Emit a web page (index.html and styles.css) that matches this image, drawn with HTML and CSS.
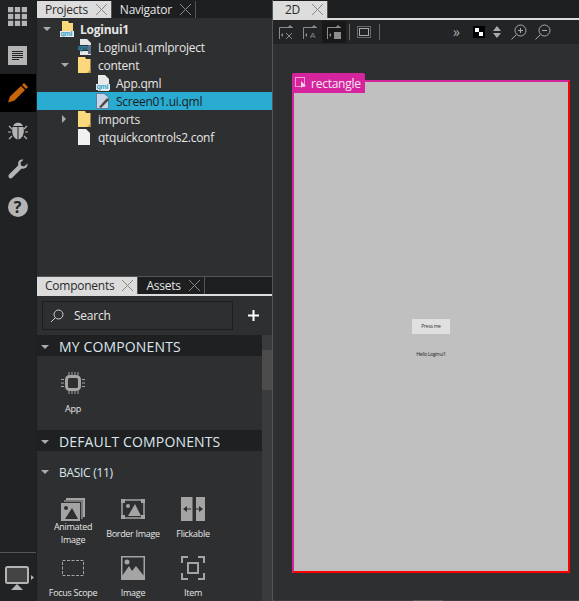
FILE: index.html
```html
<!DOCTYPE html>
<html lang="en">
<head>
    <meta charset="UTF-8">
    <title>Qt Design Studio</title>
    <link rel="stylesheet" href="styles.css">
</head>
<body>
    <div class="rail">
        <div class="rail-item first">
            <svg width="19" height="19" viewBox="0 0 18 18" fill="#b4b4b4">
                <rect width="5" height="5"/><rect x="6.500" width="5" height="5"/><rect x="13" width="5" height="5"/>
                <rect y="6.500" width="5" height="5"/><rect x="6.500" y="6.500" width="5" height="5"/><rect x="13" y="6.500" width="5" height="5"/>
                <rect y="13" width="5" height="5"/><rect x="6.500" y="13" width="5" height="5"/><rect x="13" y="13" width="5" height="5"/>
            </svg>
        </div>
        <div class="rail-item">
            <svg width="19" height="19" viewBox="0 0 19 19">
                <rect width="19" height="19" fill="#b4b4b4"/>
                <path d="M4 5.500h11M4 7.500h11M4 9.500h11M4 11.500h11M4 13.500h7" stroke="#222" stroke-width="1"/>
            </svg>
        </div>
        <div class="rail-item active">
            <svg width="20" height="20" viewBox="0 0 20 20">
                <path d="M0 19.500 2 13.500 13 3 17 7 6.500 17.500Z" fill="#c8650b"/>
                <path d="M14 2 16 0 20 4 18 6Z" fill="#c8650b"/>
            </svg>
        </div>
        <div class="rail-item">
            <svg width="20" height="20" viewBox="0 0 20 20">
                <path d="M1 5l3 3M19 5l-3 3M0 11h3M20 11h-3M1 18l3-3M19 18l-3-3" stroke="#b4b4b4" stroke-width="1.200"/>
                <path d="M6 3.500C7 1 13 1 14 3.500L15 5H5Z" fill="#b4b4b4"/>
                <path d="M9.500 6H4.500C3.500 11 4.500 17 9.500 18.500ZM10.500 6H15.500C16.500 11 15.500 17 10.500 18.500Z" fill="#b4b4b4"/>
            </svg>
        </div>
        <div class="rail-item">
            <svg width="20" height="20" viewBox="0 0 20 20">
                <path d="M14 0.500C11 0.500 9.500 3 10.300 6.200L0.800 15.800C-0.500 18 2 20.500 4 19L13.600 9.500C17 10.300 19.800 8.500 19.500 4.500L16 7.500 13 6.500 12.500 3.500 15.500 0.800Z" fill="#b4b4b4"/>
            </svg>
        </div>
        <div class="rail-item">
            <div class="help-icon">?</div>
        </div>
        <div class="rail-bottom">
            <svg width="30" height="25" viewBox="0 0 30 25">
                <rect x="1" y="1" width="22" height="16" rx="1.500" fill="#444" stroke="#b4b4b4" stroke-width="2"/>
                <path d="M12 18 6 24H18Z" fill="#b4b4b4"/>
                <path d="M26 9l3 2.500-3 2.500Z" fill="#b4b4b4"/>
            </svg>
        </div>
    </div>

    <div class="left-col">
        <div class="tabs">
            <div class="tab current">Projects <span class="tab-x"></span></div>
            <div class="tab">Navigator <span class="tab-x"></span></div>
        </div>
        <div class="tree">
            <div class="row bold">
                <span class="arrow down"></span>
                <svg class="file-icon" viewBox="0 0 16 16"><path d="M2 0H8L9 2H13V16H2Z" fill="#fcd87c"/><rect y="10" width="14" height="6" fill="#e8eef0"/><text x="0.500" y="15" class="qml-tag">qml</text></svg>
                Loginui1
            </div>
            <div class="row lvl1">
                <svg class="file-icon" viewBox="0 0 16 16"><path d="M2 0H9L13 4V16H2Z" fill="#e4e6e8"/><rect x="0" y="6" width="10" height="6" fill="#2e2f30"/><text x="0" y="11" class="qml-tag">qml</text><rect x="10" y="6" width="3" height="9" fill="#5c6f86"/></svg>
                Loginui1.qmlproject
            </div>
            <div class="row lvl1">
                <span class="arrow down"></span>
                <svg class="file-icon" viewBox="0 0 16 16"><path d="M0 0H7L8 2H12.500V16H0Z" fill="#fcd87c"/><path d="M9 16 12.500 12.500V16Z" fill="#c49c3c"/></svg>
                content
            </div>
            <div class="row lvl2">
                <svg class="file-icon" viewBox="0 0 16 16"><path d="M2 0H9L13 4V16H2Z" fill="#e8e8e8"/><rect y="9" width="14" height="6" fill="#e8eef0"/><text x="0.500" y="14" class="qml-tag">qml</text></svg>
                App.qml
            </div>
            <div class="row lvl2 selected">
                <svg class="file-icon" viewBox="0 0 16 16"><path d="M.5 .5H8L12.500 4V15.500H.5Z" fill="#c6d6e8" stroke="#5c7ea0"/><path d="M3 14 11 5 13 7 5 15Z" fill="#54493c"/></svg>
                Screen01.ui.qml
            </div>
            <div class="row lvl1">
                <span class="arrow right"></span>
                <svg class="file-icon" viewBox="0 0 16 16"><path d="M0 0H7L8 2H12.500V16H0Z" fill="#fcd87c"/><path d="M9 16 12.500 12.500V16Z" fill="#c49c3c"/></svg>
                imports
            </div>
            <div class="row lvl1">
                <svg class="file-icon" viewBox="0 0 16 16"><path d="M0 0H8L12 4V16H0Z" fill="#f0f0f0"/></svg>
                qtquickcontrols2.conf
            </div>
        </div>

        <div class="components">
            <div class="tabs lined">
                <div class="tab current">Components <span class="tab-x"></span></div>
                <div class="tab">Assets <span class="tab-x"></span></div>
            </div>
            <div class="search-bar">
                <div class="search-box">
                    <svg width="14" height="14" viewBox="0 0 14 14" fill="none" stroke="#d0d0d0"><circle cx="8.500" cy="5.500" r="4.500"/><path d="M5 9 1 13"/></svg>
                    Search
                </div>
                <svg class="plus" width="11" height="11" viewBox="0 0 11 11"><path d="M0 5.500h11M5.500 0v11" stroke="#fff" stroke-width="2"/></svg>
            </div>
            <div class="lib">
                <div class="lib-list">
                    <div class="section"><span class="arrow down"></span>MY COMPONENTS</div>
                    <div class="grid my-grid">
                        <div class="item">
                            <svg width="24" height="22" viewBox="0 0 24 22" fill="none" stroke="#a4a4a4">
                                <rect x="5.500" y="4.500" width="13" height="13" rx="3" stroke-width="3"/>
                                <path d="M8 0v3M11 0v3M14 0v3M17 0v3M8 19v3M11 19v3M14 19v3M17 19v3M0 7.500h3M0 11h3M0 14.500h3M21 7.500h3M21 11h3M21 14.500h3"/>
                            </svg>
                            <span class="item-name">App</span>
                        </div>
                    </div>
                    <div class="section"><span class="arrow down"></span>DEFAULT COMPONENTS</div>
                    <div class="subsection"><span class="arrow down"></span>BASIC (11)</div>
                    <div class="grid">
                        <div class="item">
                            <svg width="24" height="24" viewBox="0 0 24 24">
                                <path d="M5 3V1H24V20H22V3Z" fill="#a4a4a4"/><path d="M3 5V3H22V22H20V5Z" fill="#7a7a7a"/>
                                <rect y="6" width="19" height="18" fill="#a4a4a4"/><circle cx="5" cy="11" r="2" fill="#2e2f30"/><path d="M4 22 11 11 17 22Z" fill="#2e2f30"/>
                            </svg>
                            <span class="item-name">Animated Image</span>
                        </div>
                        <div class="item">
                            <svg width="24" height="24" viewBox="0 0 24 24">
                                <rect x="1" y="3" width="22" height="18" fill="none" stroke="#a4a4a4" stroke-width="1.500"/>
                                <rect y="2" width="4" height="4" fill="#a4a4a4"/><rect x="20" y="2" width="4" height="4" fill="#a4a4a4"/><rect y="18" width="4" height="4" fill="#a4a4a4"/><rect x="20" y="18" width="4" height="4" fill="#a4a4a4"/>
                                <circle cx="7" cy="9" r="2" fill="#a4a4a4"/><path d="M7 19 14 7 20 19Z" fill="#a4a4a4"/>
                            </svg>
                            <span class="item-name">Border Image</span>
                        </div>
                        <div class="item">
                            <svg width="24" height="24" viewBox="0 0 24 24">
                                <rect width="11.500" height="24" fill="#a4a4a4"/><rect x="15" width="9" height="24" fill="#a4a4a4"/>
                                <path d="M2 12 6 9V15ZM22 12 18 9V15Z" fill="#2e2f30"/><path d="M6 12h4M15 12h3" stroke="#2e2f30"/>
                            </svg>
                            <span class="item-name">Flickable</span>
                        </div>
                        <div class="item">
                            <svg width="24" height="24" viewBox="0 0 24 24"><rect x="1.500" y="4.500" width="21" height="15" fill="none" stroke="#a4a4a4" stroke-dasharray="3 1.500"/></svg>
                            <span class="item-name">Focus Scope</span>
                        </div>
                        <div class="item">
                            <svg width="24" height="24" viewBox="0 0 24 24">
                                <rect width="24" height="24" fill="#a4a4a4"/><rect x="1.500" y="1.500" width="21" height="18" fill="#2e2f30"/>
                                <circle cx="6" cy="6" r="2.500" fill="#a4a4a4"/><path d="M1 20 8 10 11 15 15 10 23 20Z" fill="#a4a4a4"/>
                            </svg>
                            <span class="item-name">Image</span>
                        </div>
                        <div class="item">
                            <svg width="24" height="24" viewBox="0 0 24 24" fill="none" stroke="#a4a4a4" stroke-width="2">
                                <path d="M1 7V1H7M17 1H23V7M23 17V23H17M7 23H1V17"/><rect x="7" y="7" width="10" height="10"/>
                            </svg>
                            <span class="item-name">Item</span>
                        </div>
                    </div>
                </div>
                <div class="scrollbar"><div class="scroll-thumb"></div></div>
            </div>
        </div>
    </div>

    <div class="right-col">
        <div class="tabs lined">
            <div class="tab current tab-2d">2D <span class="tab-x"></span></div>
        </div>
        <div class="toolbar">
            <svg class="tool" viewBox="0 0 14 14" fill="none" stroke="#8c8c8c"><path d="M.5 14V2.500H14"/><path d="M9 2 11 0 13 2ZM2 10 4 8V12Z" fill="#8c8c8c" stroke="none"/><path d="M7 8l6 6M13 8l-6 6"/></svg>
            <svg class="tool" viewBox="0 0 14 14" fill="none" stroke="#8c8c8c"><path d="M.5 14V2.500H14"/><path d="M9 2 11 0 13 2ZM2 10 4 8V12Z" fill="#8c8c8c" stroke="none"/><text x="7" y="13" class="tool-letter">A</text></svg>
            <span class="tool-on"><svg width="14" height="14" viewBox="0 0 14 14" fill="none" stroke="#8c8c8c"><path d="M.5 14V2.500H14"/><path d="M9 2 11 0 13 2ZM2 10 4 8V12Z" fill="#8c8c8c" stroke="none"/><rect x="7" y="7" width="7" height="7" fill="#8c8c8c" stroke="none"/></svg></span>
            <span class="tool-sep"></span>
            <svg class="tool fit" viewBox="0 0 14 12" fill="none" stroke="#aaa"><rect x="2.500" y="2.500" width="9" height="7"/><rect x=".5" y=".5" width="13" height="11" stroke-dasharray="1 1"/></svg>
            <span class="tool-sep"></span>
            <span class="more">»</span>
            <svg class="swatch" width="12" height="12" viewBox="0 0 12 12"><rect width="12" height="12" fill="#000"/><rect x="2" y="2" width="4" height="4" fill="#fff"/><rect x="6" y="6" width="4" height="4" fill="#fff"/></svg>
            <svg class="updown" width="8" height="12" viewBox="0 0 8 12" fill="#aaa"><path d="M4 0 8 5H0ZM4 12 0 7H8Z"/></svg>
            <svg class="zoom-in" width="16" height="16" viewBox="0 0 16 16" fill="none" stroke="#aaa"><circle cx="9.500" cy="6.500" r="5.500"/><path d="M5.500 10.500 .5 15.500M7 6.500h5M9.500 4v5"/></svg>
            <svg width="16" height="16" viewBox="0 0 16 16" fill="none" stroke="#aaa"><circle cx="9.500" cy="6.500" r="5.500"/><path d="M5.500 10.500 .5 15.500M7 6.500h5"/></svg>
        </div>
        <div class="canvas">
            <div class="rectangle">
                <div class="sel-label">
                    <svg width="12" height="12" viewBox="0 0 12 12" fill="none" stroke="#f0a0d0"><rect x=".5" y=".5" width="9" height="9"/><path d="M6 4v7l2-2h3Z" fill="#f0d0e4" stroke="none"/></svg>
                    rectangle
                </div>
                <div class="press-btn">Press me</div>
                <div class="hello">Hello Loginui1</div>
            </div>
        </div>
        <div class="hbar"><div class="hbar-thumb"></div></div>
    </div>
</body>
</html>
```

FILE: styles.css
```css
body {
    margin: 0;
    width: 579px;
    height: 601px;
    overflow: hidden;
    display: flex;
    background-color: #1d1e1f;
    font-family: "Open Sans", "Noto Sans", sans-serif;
    font-size: 12px;
    letter-spacing: -0.25px;
    color: #e6e6e6;
}

svg {
    display: block;
    flex-shrink: 0;
}

/* left icon rail */
.rail {
    width: 36px;
    margin-right: 1px;
    background-color: #212223;
    display: flex;
    flex-direction: column;
}

.rail-item {
    height: 38px;
    display: flex;
    align-items: center;
    justify-content: center;
    padding-right: 1px;
}

.rail-item.first {
    height: 33px;
    padding-bottom: 3px;
}

.rail-item.active {
    background-color: #000;
}

.help-icon {
    width: 20px;
    height: 20px;
    border-radius: 50%;
    background-color: #b4b4b4;
    color: #212223;
    font-size: 16px;
    font-weight: bold;
    line-height: 20px;
    text-align: center;
}

.rail-bottom {
    margin-top: auto;
    height: 49px;
    border-top: 1px solid #555;
    box-sizing: border-box;
    padding: 13px 0 0 5px;
}

/* tabs */
.tabs {
    height: 17px;
    display: flex;
    background-color: #1d1e1f;
    padding-top: 1px;
}

.tabs.lined {
    border-bottom: 2px solid #dcdcdc;
}

.components .tabs {
    padding-top: 0;
}

.tab {
    display: flex;
    align-items: center;
    padding: 0 4px 0 8px;
    gap: 8px;
    border-right: 1px solid #555;
}

.tab.current {
    background-color: #dcdcdc;
    color: #2a2a2a;
}

.tab-x {
    width: 11px;
    height: 11px;
    background:
        linear-gradient(45deg, transparent 46%, #888 46%, #888 54%, transparent 54%),
        linear-gradient(-45deg, transparent 46%, #888 46%, #888 54%, transparent 54%);
}

/* project tree */
.left-col {
    width: 235px;
    display: flex;
    flex-direction: column;
    border-right: 1px solid #555;
}

.tree {
    height: 258px;
    padding-top: 2px;
    box-sizing: border-box;
    background-color: #2e2f30;
}

.row {
    height: 18px;
    display: flex;
    align-items: center;
    gap: 4px;
    padding-left: 23px;
    position: relative;
}

.row.bold {
    font-weight: bold;
}

.row.lvl1 {
    padding-left: 41px;
}

.row.lvl2 {
    padding-left: 59px;
}

.selected {
    background-color: #2aabd2;
    color: #1c1c1c;
}

.arrow {
    position: absolute;
    width: 0;
    height: 0;
}

.row .arrow {
    margin-left: -17px;
}

.arrow.down {
    border-left: 4px solid transparent;
    border-right: 4px solid transparent;
    border-top: 4px solid #aaa;
}

.row .arrow.right {
    border-top: 4px solid transparent;
    border-bottom: 4px solid transparent;
    border-left: 4px solid #aaa;
    margin-left: -16px;
}

.file-icon {
    width: 16px;
    height: 16px;
}

.qml-tag {
    font-family: "Liberation Sans", sans-serif;
    font-size: 7px;
    fill: #2f9fc4;
    font-weight: bold;
}

/* components panel */
.components {
    flex: 1;
    border-top: 1px solid #555;
    display: flex;
    flex-direction: column;
    min-height: 0;
}

.search-bar {
    height: 39px;
    background-color: #2e2f30;
    display: flex;
    align-items: center;
    padding-left: 5px;
}

.search-box {
    width: 182px;
    height: 27px;
    border: 1px solid #1d1e1f;
    display: flex;
    align-items: center;
    gap: 10px;
    padding-left: 7px;
}

.plus {
    margin-left: 15px;
}

.lib {
    flex: 1;
    display: flex;
    min-height: 0;
    background-color: #2e2f30;
}

.lib-list {
    width: 225px;
}

.section {
    height: 21px;
    background-color: #1f2021;
    font-size: 14px;
    letter-spacing: 0.15px;
    line-height: 23px;
    padding-left: 22px;
    position: relative;
    color: #dde6ee;
}

.section .arrow,
.subsection .arrow {
    left: 4px;
    top: 10px;
}

.subsection {
    height: 42px;
    line-height: 44px;
    padding-left: 22px;
    position: relative;
    color: #dde6ee;
    letter-spacing: -0.3px;
}

.subsection .arrow {
    top: 19px;
}

.grid {
    display: grid;
    grid-template-columns: repeat(3, 60px);
    padding: 4px 0 0 6px;
}

.my-grid {
    height: 74px;
    padding-top: 16px;
    box-sizing: border-box;
}

.item {
    height: 59px;
    display: flex;
    flex-direction: column;
    align-items: center;
    font-size: 9px;
    letter-spacing: -0.3px;
    line-height: 13px;
    text-align: center;
}

.item-name {
    height: 24px;
    display: flex;
    align-items: center;
}

.my-grid .item-name {
    margin-top: 2px;
}

.scrollbar {
    flex: 1;
    background-color: #3a3b3c;
}

.scroll-thumb {
    height: 40px;
    margin-top: 15px;
    background-color: #4c4c4c;
}

/* 2D view */
.right-col {
    flex: 1;
    display: flex;
    flex-direction: column;
    min-width: 0;
}

.tab-2d {
    width: 55px;
    box-sizing: border-box;
    justify-content: space-between;
    padding-left: 12px;
}

.toolbar {
    height: 24px;
    background-color: #232425;
    display: flex;
    align-items: center;
    padding-left: 6px;
}

.tool {
    width: 14px;
    height: 14px;
    margin-right: 10px;
    overflow: visible;
}

.tool-letter {
    font-family: "Liberation Sans", sans-serif;
    font-size: 8px;
    fill: #8c8c8c;
    stroke: none;
}

.tool-on {
    width: 24px;
    height: 22px;
    margin: 0 3px 0 -5px;
    background-color: #181818;
    display: flex;
    align-items: center;
    justify-content: center;
}

.tool-sep {
    width: 1px;
    height: 16px;
    background-color: #666;
    margin-right: 7px;
}

.tool.fit {
    height: 12px;
    margin-right: 8px;
}

.more {
    width: 8px;
    margin-left: 66px;
    margin-right: 12px;
    color: #aaa;
    font-size: 14px;
    line-height: 14px;
}

.swatch {
    margin-right: 8px;
}

.updown {
    margin-right: 10px;
}

.zoom-in {
    margin-right: 8px;
}

.canvas {
    flex: 1;
    background-color: #2e2f30;
    padding: 36px 0 0 19px;
}

.hbar {
    height: 1px;
    background-color: #3a3b3c;
    padding-left: 140px;
}

.hbar-thumb {
    width: 30px;
    height: 1px;
    background-color: #555;
}

.rectangle {
    width: 278px;
    height: 493px;
    box-sizing: border-box;
    background-color: #c0c0c0;
    border: 2px solid #f00;
    border-top-color: #d6249f;
    border-left-color: #d6249f;
    position: relative;
    display: flex;
    flex-direction: column;
    align-items: center;
}

.sel-label {
    position: absolute;
    left: -2px;
    top: -9px;
    height: 20px;
    width: 73px;
    box-sizing: border-box;
    border-radius: 2px 2px 0 0;
    background-color: #d6249f;
    color: #f8e6f2;
    display: flex;
    align-items: center;
    gap: 4px;
    padding-left: 3px;
}

.press-btn {
    margin-top: 237px;
    width: 38px;
    height: 15px;
    background-color: #e0e0e0;
    color: #333;
    font-size: 5px;
    line-height: 15px;
    text-align: center;
}

.hello {
    margin-top: 16px;
    font-size: 5px;
    line-height: 8px;
    color: #222;
}
```
